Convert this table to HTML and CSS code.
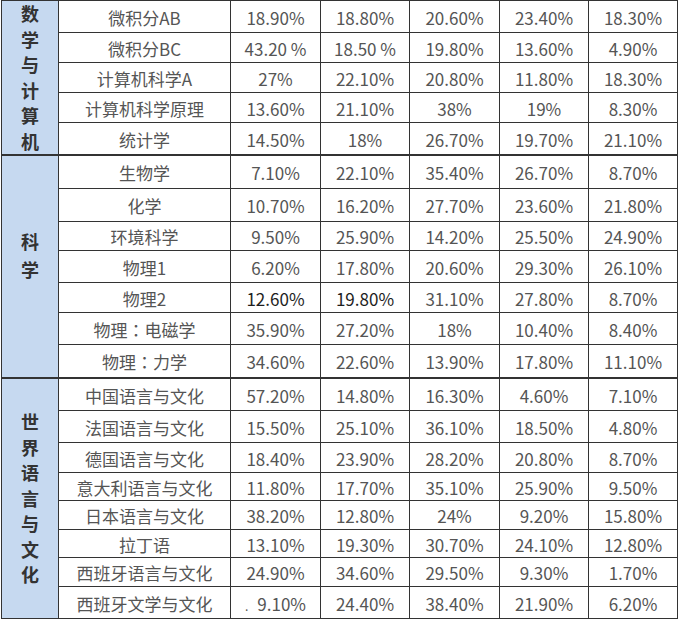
FILE: index.html
```html
<!DOCTYPE html>
<html lang="zh-CN">
<head>
<meta charset="utf-8">
<title>AP 成绩分布</title>
<link rel="stylesheet" href="styles.css">
</head>
<body>
<div class="table">
  <div class="group g-math">
    <div class="cat">数<br>学<br>与<br>计<br>算<br>机</div>
    <div class="c">微积分AB</div><div class="c">18.90%</div><div class="c">18.80%</div><div class="c">20.60%</div><div class="c">23.40%</div><div class="c">18.30%</div>
    <div class="c">微积分BC</div><div class="c">43.20 %</div><div class="c">18.50 %</div><div class="c">19.80%</div><div class="c">13.60%</div><div class="c">4.90%</div>
    <div class="c">计算机科学A</div><div class="c">27%</div><div class="c">22.10%</div><div class="c">20.80%</div><div class="c">11.80%</div><div class="c">18.30%</div>
    <div class="c">计算机科学原理</div><div class="c">13.60%</div><div class="c">21.10%</div><div class="c">38%</div><div class="c">19%</div><div class="c">8.30%</div>
    <div class="c">统计学</div><div class="c">14.50%</div><div class="c">18%</div><div class="c">26.70%</div><div class="c">19.70%</div><div class="c">21.10%</div>
  </div>
  <div class="group g-sci">
    <div class="cat cat-sci">科<br>学</div>
    <div class="c">生物学</div><div class="c">7.10%</div><div class="c">22.10%</div><div class="c">35.40%</div><div class="c">26.70%</div><div class="c">8.70%</div>
    <div class="c">化学</div><div class="c">10.70%</div><div class="c">16.20%</div><div class="c">27.70%</div><div class="c">23.60%</div><div class="c">21.80%</div>
    <div class="c">环境科学</div><div class="c">9.50%</div><div class="c">25.90%</div><div class="c">14.20%</div><div class="c">25.50%</div><div class="c">24.90%</div>
    <div class="c">物理1</div><div class="c">6.20%</div><div class="c">17.80%</div><div class="c">20.60%</div><div class="c">29.30%</div><div class="c">26.10%</div>
    <div class="c">物理2</div><div class="c dark">12.60%</div><div class="c dark">19.80%</div><div class="c">31.10%</div><div class="c">27.80%</div><div class="c">8.70%</div>
    <div class="c">物理<span class="colon">：</span>电磁学</div><div class="c">35.90%</div><div class="c">27.20%</div><div class="c">18%</div><div class="c">10.40%</div><div class="c">8.40%</div>
    <div class="c">物理<span class="colon">：</span>力学</div><div class="c">34.60%</div><div class="c">22.60%</div><div class="c">13.90%</div><div class="c">17.80%</div><div class="c">11.10%</div>
  </div>
  <div class="group g-lang">
    <div class="cat">世<br>界<br>语<br>言<br>与<br>文<br>化</div>
    <div class="c">中国语言与文化</div><div class="c">57.20%</div><div class="c">14.80%</div><div class="c">16.30%</div><div class="c">4.60%</div><div class="c">7.10%</div>
    <div class="c">法国语言与文化</div><div class="c">15.50%</div><div class="c">25.10%</div><div class="c">36.10%</div><div class="c">18.50%</div><div class="c">4.80%</div>
    <div class="c">德国语言与文化</div><div class="c">18.40%</div><div class="c">23.90%</div><div class="c">28.20%</div><div class="c">20.80%</div><div class="c">8.70%</div>
    <div class="c">意大利语言与文化</div><div class="c">11.80%</div><div class="c">17.70%</div><div class="c">35.10%</div><div class="c">25.90%</div><div class="c">9.50%</div>
    <div class="c">日本语言与文化</div><div class="c">38.20%</div><div class="c">12.80%</div><div class="c">24%</div><div class="c">9.20%</div><div class="c">15.80%</div>
    <div class="c">拉丁语</div><div class="c">13.10%</div><div class="c">19.30%</div><div class="c">30.70%</div><div class="c">24.10%</div><div class="c">12.80%</div>
    <div class="c">西班牙语言与文化</div><div class="c">24.90%</div><div class="c">34.60%</div><div class="c">29.50%</div><div class="c">9.30%</div><div class="c">1.70%</div>
    <div class="c">西班牙文学与文化</div><div class="c"><span class="dot">.</span>9.10%</div><div class="c">24.40%</div><div class="c">38.40%</div><div class="c">21.90%</div><div class="c">6.20%</div>
  </div>
</div>
</body>
</html>
```

FILE: styles.css
```css
html, body {
  margin: 0;
  padding: 0;
  background: #ffffff;
}

.table {
  margin-left: 1px;
  width: 677px;
  box-sizing: border-box;
  padding: 1px;
  background: #333333;
  display: flex;
  flex-direction: column;
  gap: 2px;
}

.group {
  display: grid;
  grid-template-columns: 56px 171px 89px 88px 89px 88px 88px;
  column-gap: 1px;
  row-gap: 1px;
}

.g-math { grid-template-rows: 31px 29px 29px 29px 31px; }
.g-sci  { grid-template-rows: 32px 32px 28px 31px 29px 31px 32px; }
.g-lang { grid-template-rows: 31px 31px 29px 27px 28px 27px 28px 31px; }

.cat {
  grid-column: 1;
  grid-row: 1 / -1;
  background: #c6d9f0;
  display: flex;
  align-items: center;
  justify-content: center;
  text-align: center;
  font-family: "Noto Sans CJK SC", sans-serif;
  font-weight: 700;
  font-size: 18px;
  line-height: 25.5px;
  color: #333333;
  overflow: hidden;
}

.cat-sci {
  padding-bottom: 24px;
  line-height: 28px;
}

.c {
  background: #ffffff;
  display: flex;
  align-items: center;
  justify-content: center;
  font-family: "Noto Sans CJK SC", sans-serif;
  font-size: 17px;
  color: #555555;
  white-space: pre;
  padding-top: 1px;
}

.colon {
  font-family: "Noto Sans CJK TC", "Noto Sans CJK SC", sans-serif;
}

.dark {
  color: #1e1e1e;
}

.dot {
  font-size: 12px;
  margin-right: 9px;
  align-self: flex-end;
  margin-bottom: 4px;
}
```
